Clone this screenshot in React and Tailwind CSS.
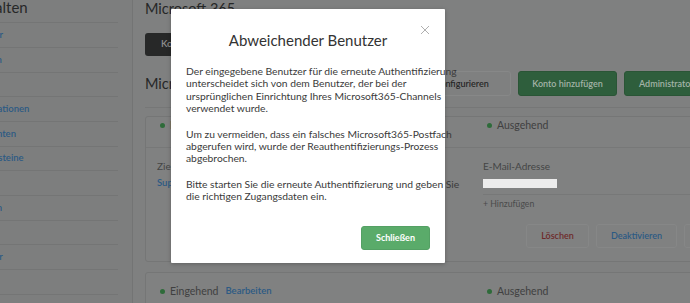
import React from "react";

const sideItems = [
  "Benutzer",
  "Gruppen",
  "Rollen",
  "Organisationen",
  "Übersichten",
  "Textbausteine",
  "Makros",
  "Vorlagen",
  "Tags",
  "Kalender",
  "SLAs",
  "Trigger",
];

export default function App() {
  return (
    <div
      className="relative w-[690px] h-[303px] overflow-hidden bg-[#7f8080]"
      style={{ fontFamily: "Lato, 'Open Sans', sans-serif" }}
    >
      <div className="flex h-full">
        {/* Sidebar */}
        <div className="w-[133px] shrink-0 h-full overflow-hidden border-r border-[#737474] bg-[#7d7e7e]">
          <div className="mr-[14px]">
            <div className="h-[23.3px] ml-[-39px] border-b border-[#747575] text-[15px] leading-[14px] text-[#272828] whitespace-nowrap">
              Verwalten
            </div>
            {sideItems.map((t) => (
              <div
                key={t}
                className="h-[24.7px] flex items-center border-b border-[#747575] whitespace-nowrap"
              >
                <span className="ml-[-35px] text-[9.5px] font-semibold text-[#2c5a84]">{t}</span>
              </div>
            ))}
          </div>
        </div>

        {/* Main */}
        <div className="flex-1 h-full overflow-hidden pl-[12px]">
          <div className="text-[14.5px] leading-[18px] text-[#262727] whitespace-nowrap">
            Microsoft 365
          </div>
          <div className="mt-[15px] flex">
            <div className="h-[23px] w-[70px] rounded-[3px] bg-[#272828] text-[#8d8e8e] text-[9.5px] font-semibold flex items-center pl-[16px]">
              Konten
            </div>
          </div>
          <div className="mt-[15px] flex items-center h-[25px]">
            <div className="w-[250px] shrink-0 text-[14.5px] leading-[18px] text-[#262727] whitespace-nowrap">
              Microsoft 365
            </div>
            <div className="flex shrink-0 gap-[7px]">
              <div className="h-[25px] w-[116px] shrink-0 rounded-[3px] border border-[#878888] bg-[#7f8080] text-[9px] font-semibold text-[#262727] flex items-center justify-center whitespace-nowrap">
                App konfigurieren
              </div>
              <div className="h-[25px] w-[99px] shrink-0 rounded-[3px] bg-[#2e5e3c] border border-[#2a5536] text-[9px] font-semibold text-[#a3b3a7] flex items-center justify-center whitespace-nowrap">
                Konto hinzufügen
              </div>
              <div className="h-[25px] shrink-0 pl-[14px] pr-[14px] rounded-[3px] bg-[#2e5e3c] border border-[#2a5536] text-[9px] font-semibold text-[#a3b3a7] flex items-center whitespace-nowrap">
                Administrator-Konto hinzufügen
              </div>
            </div>
          </div>
          <div className="mt-[11px] border-t border-[#767777] mr-[-20px]" />

          {/* Card 1 */}
          <div className="mt-[8px] mr-[-20px] border border-[#757676] rounded-[3px] h-[146px] bg-[#808181]">
            <div className="flex h-[31px] border-b border-[#777878]">
              <div className="w-[327px] shrink-0 flex items-center h-[16px] pl-[14px] gap-[5px]">
                <span className="w-[5px] h-[5px] rounded-full bg-[#2e6b3a]" />
                <span className="text-[10.5px] text-[#3f4040] leading-[12px]">Eingehend</span>
              </div>
              <div className="flex items-center h-[16px] pl-[14px] gap-[5px]">
                <span className="w-[5px] h-[5px] rounded-full bg-[#2e6b3a]" />
                <span className="text-[10.5px] text-[#3f4040] leading-[12px]">Ausgehend</span>
              </div>
            </div>
            <div className="flex">
              <div className="w-[327px] shrink-0 pl-[11px] pt-[12px]">
                <div className="text-[10px] text-[#444545] leading-[12px]">Ziel-Gruppe</div>
                <div className="mt-[4.5px] text-[9.5px] font-semibold text-[#2c5a84] leading-[12px]">Support</div>
              </div>
              <div className="flex-1 pl-[10px] pt-[12px] min-w-0">
                <div className="text-[10px] text-[#444545] leading-[12px]">E-Mail-Adresse</div>
                <div className="mt-[7px] pb-[6px] border-b border-[#777878]">
                  <div className="h-[9px] w-[74px] bg-[#ececec]" />
                </div>
                <div className="mt-[3px] text-[8.7px] text-[#4a4b4b] leading-[12px]">+ Hinzufügen</div>
                <div className="mt-[14px] ml-[43px] flex gap-[7px]">
                  <div className="h-[24px] w-[63px] shrink-0 rounded-[3px] border border-[#868787] text-[9px] font-semibold text-[#6e2a2a] flex items-center justify-center">
                    Löschen
                  </div>
                  <div className="h-[24px] w-[81px] shrink-0 rounded-[3px] border border-[#868787] text-[9px] font-semibold text-[#2c5a84] flex items-center justify-center">
                    Deaktivieren
                  </div>
                  <div className="h-[24px] w-[81px] shrink-0 rounded-[3px] border border-[#868787] text-[9px] font-semibold text-[#262727] flex items-center justify-center">
                    Bearbeiten
                  </div>
                </div>
              </div>
            </div>
          </div>

          {/* Card 2 */}
          <div className="mt-[10px] mr-[-20px] border border-[#757676] rounded-[3px] h-[60px] bg-[#808181]">
            <div className="flex pt-[12px]">
              <div className="w-[327px] shrink-0 flex items-center h-[12px] pl-[14px] gap-[5px]">
                <span className="w-[5px] h-[5px] rounded-full bg-[#2e6b3a]" />
                <span className="text-[10.5px] text-[#3f4040] leading-[12px]">Eingehend</span>
                <span className="ml-[2px] text-[9.5px] font-semibold text-[#2c5a84] leading-[12px]">Bearbeiten</span>
              </div>
              <div className="flex items-center h-[12px] pl-[14px] gap-[5px]">
                <span className="w-[5px] h-[5px] rounded-full bg-[#2e6b3a]" />
                <span className="text-[10.5px] text-[#3f4040] leading-[12px]">Ausgehend</span>
              </div>
            </div>
          </div>
        </div>
      </div>

      {/* Modal */}
      <div className="absolute left-[171px] top-[9px] w-[274px] h-[254px] bg-white shadow-[0_1px_4px_rgba(0,0,0,0.25)] rounded-[1px] px-[15px]">
        <div className="absolute right-[15px] top-[16px] text-[#b0b0b0]">
          <svg width="10" height="10" viewBox="0 0 10 10">
            <path d="M1 1 L9 9 M9 1 L1 9" stroke="currentColor" strokeWidth="1" />
          </svg>
        </div>
        <div className="pt-[21px] text-center text-[15px] leading-[20px] text-[#333]">
          Abweichender Benutzer
        </div>
        <div className="mt-[15px] text-[10.3px] leading-[12.3px] text-[#3a3a3a] whitespace-nowrap">
          <p>
            Der eingegebene Benutzer für die erneute Authentifizierung
            <br />
            unterscheidet sich von dem Benutzer, der bei der
            <br />
            ursprünglichen Einrichtung Ihres Microsoft365-Channels
            <br />
            verwendet wurde.
          </p>
          <p className="mt-[13.5px]">
            Um zu vermeiden, dass ein falsches Microsoft365-Postfach
            <br />
            abgerufen wird, wurde der Reauthentifizierungs-Prozess
            <br />
            abgebrochen.
          </p>
          <p className="mt-[13.5px]">
            Bitte starten Sie die erneute Authentifizierung und geben Sie
            <br />
            die richtigen Zugangsdaten ein.
          </p>
        </div>
        <div className="absolute right-[15px] bottom-[13px] h-[24px] w-[69px] rounded-[3px] bg-[#5aab6a] border border-[#54a064] text-white text-[9px] font-bold flex items-center justify-center">
          Schließen
        </div>
      </div>
    </div>
  );
}
